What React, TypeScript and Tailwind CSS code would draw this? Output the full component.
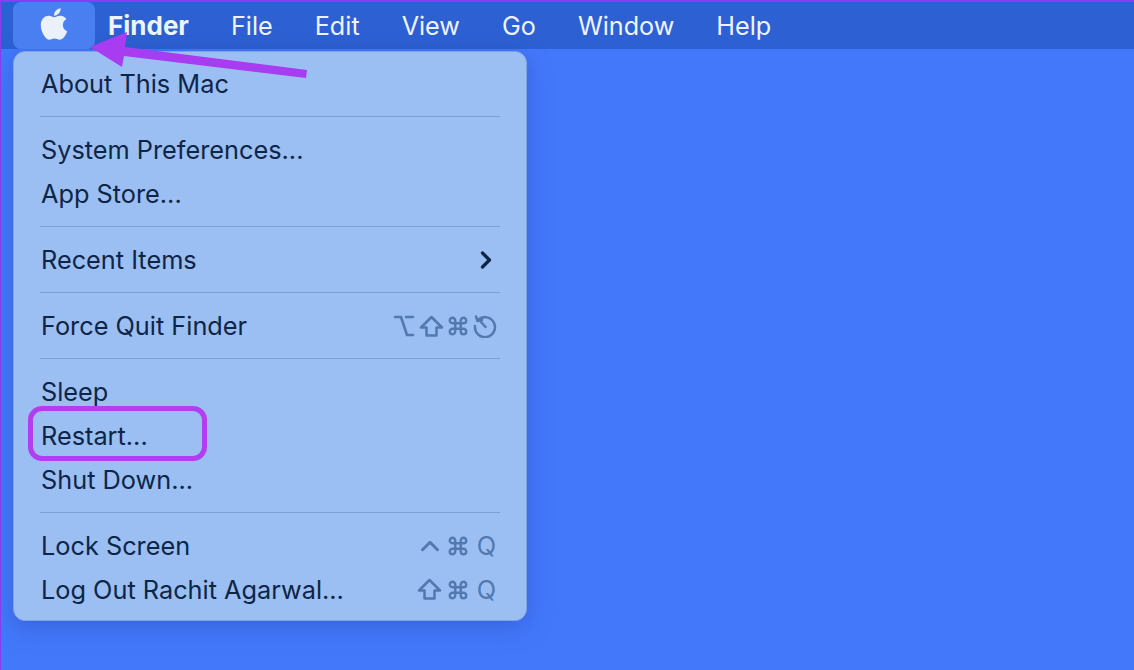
import { ChevronRight, ChevronUp, Command, Option } from "lucide-react";
import { FaApple } from "react-icons/fa";

const font = { fontFamily: "Inter, 'Noto Sans', sans-serif" };

function Divider() {
  return (
    <div className="h-[22px] px-[26px] pt-[10px]">
      <div className="h-px w-full bg-[#7c9fd6]" />
    </div>
  );
}

function Row({ label, children }: { label: string; children?: React.ReactNode }) {
  return (
    <div className="flex h-11 items-center justify-between pl-[27px] pr-[28px]">
      <span className="text-[25.3px] leading-none text-[#0e2548]">{label}</span>
      {children}
    </div>
  );
}

function ShiftKey() {
  return (
    <svg width="25" height="23" viewBox="0 0 25 23" fill="none" stroke="currentColor" strokeWidth="2.5" strokeLinejoin="round">
      <path d="M12.5 2 L2 12.5 H7.5 V20.5 H17.5 V12.5 H23 Z" />
    </svg>
  );
}

function PowerKey() {
  return (
    <svg width="25" height="24" viewBox="0 0 25 24" fill="none" stroke="currentColor" strokeWidth="2.5" strokeLinecap="round" strokeLinejoin="round">
      <path d="M6.5 5.5 A10 10 0 1 1 3 12" />
      <path d="M4 2.5 L5.5 7 L10 6" />
      <path d="M9 8 L13.5 13" />
    </svg>
  );
}

const keyIcon = "text-[#5279b0]";

export default function App() {
  return (
    <div
      className="relative h-[670px] w-[1134px] overflow-hidden border-l border-t-2 border-[#8a3df0] bg-[#4478fb]"
      style={font}
    >
      <header className="flex h-[47px] items-center bg-[#2d60d2] pl-3 text-[25.2px] text-[#eef4ff]">
        <div className="flex h-[47px] w-[82px] items-center justify-center rounded-lg bg-[#4a7ff2]">
          <FaApple className="mb-1 h-[36px] w-[36px] text-[#eaf1fb]" />
        </div>
        <nav className="ml-[13px] flex items-baseline gap-[42px]">
          <span className="text-[26px] font-bold">Finder</span>
          <span>File</span>
          <span>Edit</span>
          <span>View</span>
          <span>Go</span>
          <span>Window</span>
          <span>Help</span>
        </nav>
      </header>

      <div className="ml-3 mt-[2px] w-[514px] rounded-xl border border-[#7fa4e0] bg-[#9bbff2] pb-2 pt-[10px] shadow-[0_6px_24px_rgba(30,60,160,0.35)]">
        <Row label="About This Mac" />
        <Divider />
        <Row label="System Preferences..." />
        <Row label="App Store..." />
        <Divider />
        <Row label="Recent Items">
          <ChevronRight className="-mr-[2px] h-[28px] w-[28px] text-[#0e2548]" strokeWidth={2.8} />
        </Row>
        <Divider />
        <Row label="Force Quit Finder">
          <div className={`mr-[1px] flex items-center gap-[3px] ${keyIcon}`}>
            <Option className="h-[24px] w-[24px]" strokeWidth={2.6} />
            <ShiftKey />
            <Command className="h-[22px] w-[22px]" strokeWidth={2.6} />
            <PowerKey />
          </div>
        </Row>
        <Divider />
        <Row label="Sleep" />
        <Row label="Restart..." />
        <Row label="Shut Down..." />
        <Divider />
        <Row label="Lock Screen">
          <div className={`mr-[2px] flex items-center gap-[5px] ${keyIcon}`}>
            <ChevronUp className="-mr-[3px] h-[30px] w-[30px]" strokeWidth={2.4} />
            <Command className="h-[22px] w-[22px]" strokeWidth={2.6} />
            <span className="ml-[3px] text-[25.3px] leading-none">Q</span>
          </div>
        </Row>
        <Row label="Log Out Rachit Agarwal...">
          <div className={`mr-[2px] flex items-center gap-[5px] ${keyIcon}`}>
            <ShiftKey />
            <Command className="h-[22px] w-[22px]" strokeWidth={2.6} />
            <span className="ml-[3px] text-[25.3px] leading-none">Q</span>
          </div>
        </Row>
      </div>

      {/* annotations on top of the screenshot */}
      <div className="absolute left-[27px] top-[404px] h-[55px] w-[179px] rounded-[14px] border-[5px] border-[#b23ef0]" />
      <svg className="absolute -left-px -top-[2px]" width="320" height="90" viewBox="0 0 320 90">
        <path d="M90 47 L127 32 L125 47 L307 70 L306 78 L124 56 L122 67 Z" fill="#a83cf0" />
      </svg>
    </div>
  );
}
